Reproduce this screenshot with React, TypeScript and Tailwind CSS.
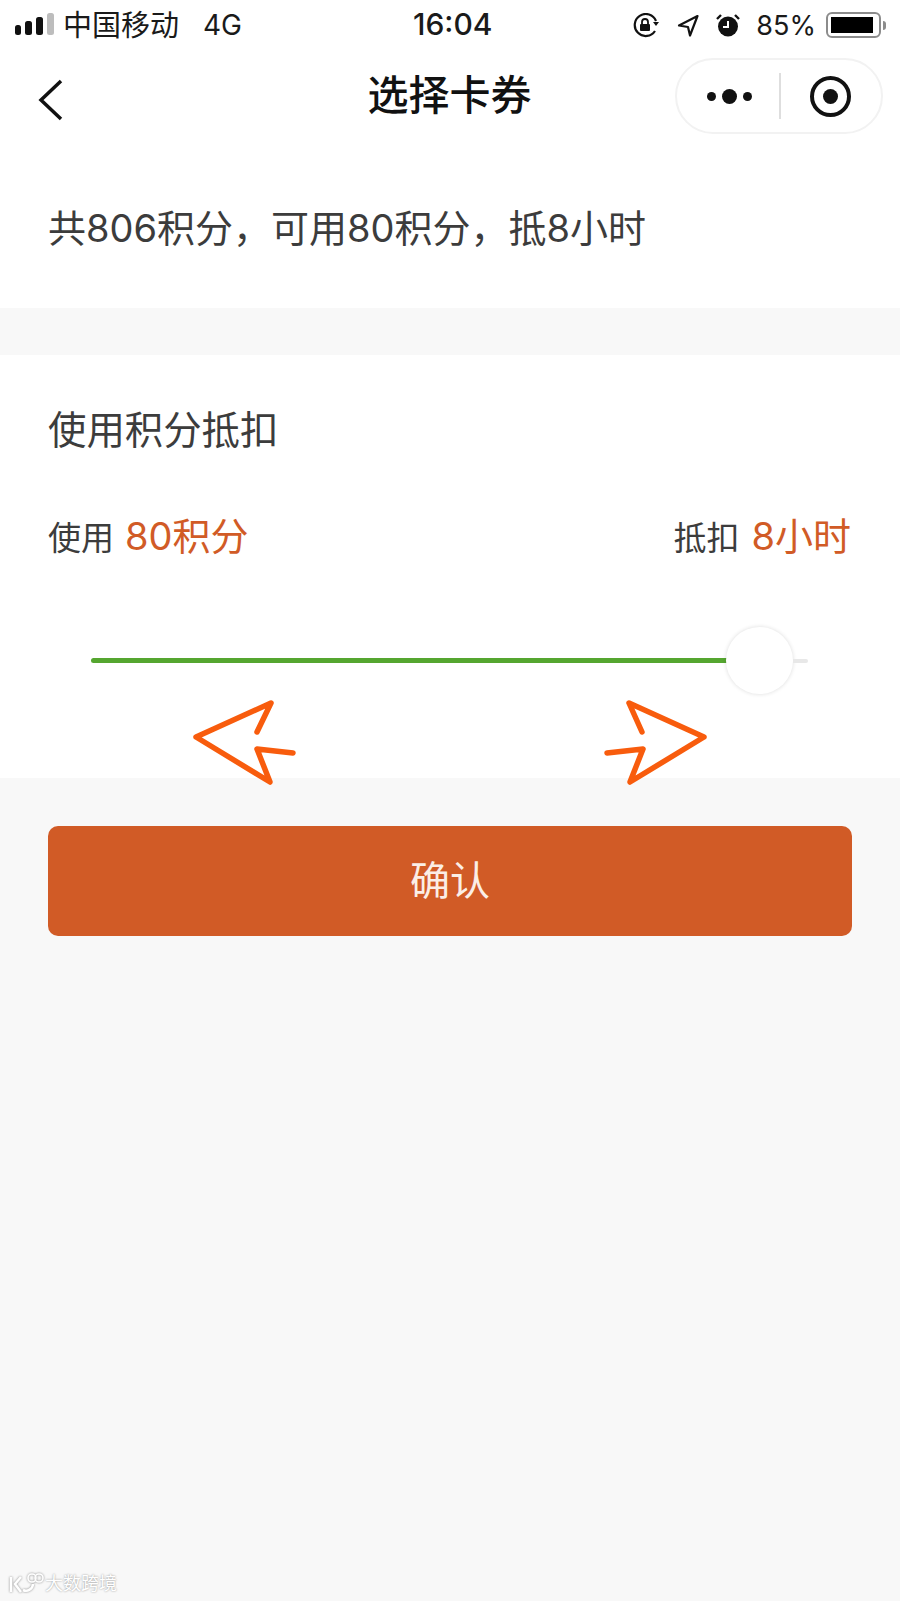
const font = "font-['Inter','Noto_Sans_CJK_SC',sans-serif]";

function StatusBar() {
  return (
    <div className="relative flex h-[50px] items-center justify-between pl-[15px] pr-[14px] leading-none text-[#1a1a1a]">
      <div className="flex items-center">
        <svg className="-mt-[2px]" width="39" height="22" viewBox="0 0 39 22">
          <rect x="0" y="12" width="6" height="10" rx="2.5" fill="#111" />
          <rect x="10" y="8" width="7" height="14" rx="2.5" fill="#111" />
          <rect x="21" y="4" width="7" height="18" rx="2.5" fill="#111" />
          <rect x="32" y="0" width="7" height="22" rx="2.5" fill="#bdbdbd" />
        </svg>
        <span className="ml-[9px] text-[29px]">中国移动</span>
        <span className="ml-[24px] text-[28px]">4G</span>
      </div>
      <span className="absolute left-[413px] top-[9px] text-[30px] font-medium">16:04</span>
      <div className="flex items-center">
        <svg width="27" height="25" viewBox="0 0 27 25" fill="none">
          <path d="M23 8A11 11 0 1 0 22 18" stroke="#111" strokeWidth="2.2" />
          <path d="M20 9l6 0-3 4z" fill="#111" />
          <rect x="7" y="11" width="10" height="7" rx="1" fill="#111" />
          <path d="M9 11V9a3 3 0 0 1 6 0v2" stroke="#111" strokeWidth="1.8" />
        </svg>
        <svg className="ml-[17px]" width="22" height="23" viewBox="0 0 22 23" fill="none">
          <path d="M20.5 2L2 11.5l9 1.5 2 8.5z" stroke="#111" strokeWidth="2.2" strokeLinejoin="round" />
        </svg>
        <svg className="ml-[17px]" width="24" height="24" viewBox="0 0 24 24">
          <circle cx="12" cy="13.5" r="10" fill="#111" />
          <path d="M12 8v6H7" stroke="#fff" strokeWidth="2" fill="none" />
          <path d="M1 6l4-4M23 6l-4-4" stroke="#111" strokeWidth="2.4" />
        </svg>
        <span className="ml-[16px] text-[27px]">85%</span>
        <div className="ml-[10px] flex h-[26px] w-[55px] items-center rounded-[6px] border-2 border-[#8c8c8c] p-[3px]">
          <div className="h-full w-[42px] bg-black" />
        </div>
        <div className="ml-[2px] h-[9px] w-[3px] rounded-r-full bg-[#8c8c8c]" />
      </div>
    </div>
  );
}

function NavBar() {
  return (
    <div className="relative flex h-[91px] items-center justify-center">
      <svg className="absolute left-[36px] top-[26px]" width="28" height="48" viewBox="0 0 28 48" fill="none">
        <path d="M25 5L5 24l20 19" stroke="#111" strokeWidth="3.5" />
      </svg>
      <h1 className="-ml-[1px] text-[41px] font-medium leading-none text-[#111]">选择卡券</h1>
      <div className="absolute left-[675px] top-[8px] flex h-[76px] w-[208px] items-center rounded-full border-2 border-[#f2f2f2] bg-white">
        <div className="flex w-[102px] items-center gap-[6px] pl-[30px]">
          <span className="h-[9px] w-[9px] rounded-full bg-[#111]" />
          <span className="h-[15px] w-[15px] rounded-full bg-[#111]" />
          <span className="h-[9px] w-[9px] rounded-full bg-[#111]" />
        </div>
        <div className="h-[46px] w-[2px] bg-[#dedede]" />
        <div className="ml-[29px] flex h-[41px] w-[41px] items-center justify-center rounded-full border-[4px] border-[#111]">
          <span className="h-[15px] w-[15px] rounded-full bg-[#111]" />
        </div>
      </div>
    </div>
  );
}

function Slider() {
  return (
    <div className="mx-[91px] mt-[72px] flex h-[67px] items-center">
      <div className="h-[5px] w-[636px] rounded-l-full bg-[#55a630]" />
      <div className="-ml-[1px] h-[67px] w-[67px] shrink-0 rounded-full bg-white shadow-[0_0_4px_rgba(0,0,0,0.14)]" />
      <div className="h-[4px] w-[15px] rounded-r-full bg-[#e8e8e8]" />
    </div>
  );
}

export default function App() {
  return (
    <div className={`relative h-[1601px] w-[900px] overflow-hidden bg-[#f8f8f8] ${font}`}>
      <div className="bg-white">
        <StatusBar />
        <NavBar />
        <div className="flex h-[167px] items-center pl-[48px] pt-[6px] text-[38px] leading-none text-[#3c3c3c]">
          共806积分，可用80积分，抵8小时
        </div>
      </div>

      <div className="mt-[47px] h-[423px] bg-white pt-[53px]">
        <div className="pl-[48px] text-[38.4px] leading-[44px] text-[#3c3c3c]">使用积分抵扣</div>
        <div className="mt-[65px] flex items-baseline justify-between pl-[48px] pr-[49px] leading-none">
          <div className="text-[33px] text-[#3c3c3c]">
            使用<span className="ml-[11px] text-[38px] text-[#d15b26]">80积分</span>
          </div>
          <div className="text-[33px] text-[#3c3c3c]">
            抵扣<span className="ml-[12px] text-[38px] text-[#d15b26]">8小时</span>
          </div>
        </div>
        <Slider />
      </div>

      <button
        type="button"
        className="mx-[48px] mt-[48px] flex h-[110px] w-[804px] items-center justify-center rounded-[10px] bg-[#d15b26] text-[40px] text-[#fbeee6]"
      >
        确认
      </button>

      {/* 滑块两侧的标注箭头 */}
      <svg className="absolute left-0 top-0" width="900" height="900" viewBox="0 0 900 900" fill="none">
        <path d="M257 732L271 703L196 737L270 782L257 749L293 753" stroke="#f85c0d" strokeWidth="5.5" strokeLinecap="round" strokeLinejoin="round" />
        <path d="M642 732L629 703L704 737L630 782L643 749L607 753" stroke="#f85c0d" strokeWidth="5.5" strokeLinecap="round" strokeLinejoin="round" />
      </svg>

      {/* 水印 */}
      <div className="absolute bottom-[5px] left-[8px] flex items-center text-white [text-shadow:0_0_2px_#8a8a8a]">
        <svg width="36" height="24" viewBox="0 0 36 24" fill="none" stroke="#fff" strokeWidth="2.5" className="drop-shadow-[0_0_1px_#888]">
          <path d="M3 5v15M13 5l-6 7 6 8" />
          <path d="M15 18a7 7 0 0 0 10-6" />
          <circle cx="24" cy="6" r="4" strokeWidth="1.6" />
          <circle cx="31" cy="6" r="4" strokeWidth="1.6" />
        </svg>
        <span className="ml-[1px] text-[18px] leading-none">大数跨境</span>
      </div>
    </div>
  );
}
